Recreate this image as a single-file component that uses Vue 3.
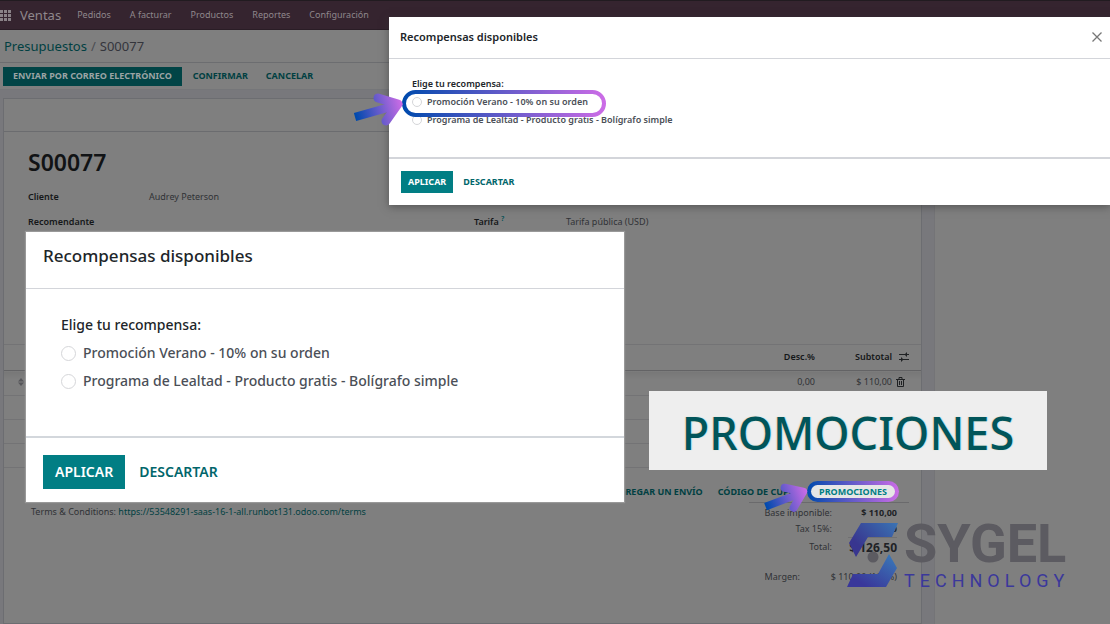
<script setup>
const menu = ['Pedidos', 'A facturar', 'Productos', 'Reportes', 'Configuración']
const rewards = ['Promoción Verano - 10% on su orden', 'Programa de Lealtad - Producto gratis - Bolígrafo simple']
const arrows = [
  { id: 'arrow-modal', name: 'arrow arrow-modal' },
  { id: 'arrow-promo', name: 'arrow arrow-promo' }
]
const dialogs = [
  { id: 'main', name: 'dialog dialog-main', closable: true },
  { id: 'detail', name: 'dialog dialog-detail', closable: false }
]
</script>

<template>
  <div class="app">
    <header class="topbar">
      <button class="apps" aria-label="Aplicaciones">
        <svg width="12" height="11" viewBox="0 0 12 11">
          <g v-for="r in 3" :key="r">
            <rect v-for="c in 3" :key="c" :x="(c - 1) * 4" :y="(r - 1) * 4" width="3" height="3" fill="#8a8287" />
          </g>
        </svg>
      </button>
      <a href="#" class="brand">Ventas</a>
      <nav class="menu">
        <a v-for="m in menu" :key="m" href="#">{{ m }}</a>
      </nav>
    </header>

    <div class="crumbs"><a href="#">Presupuestos</a><span class="slash">/</span><span>S00077</span></div>

    <div class="actions">
      <button class="primary">ENVIAR POR CORREO ELECTRÓNICO</button>
      <button>CONFIRMAR</button>
      <button>CANCELAR</button>
    </div>

    <div class="workspace">
      <main class="sheet">
        <div class="statusbar"></div>
        <h1>S00077</h1>
        <div class="fields">
          <dl>
            <dt>Cliente</dt><dd>Audrey Peterson</dd>
            <dt>Recomendante</dt><dd></dd>
          </dl>
          <dl class="right">
            <dt>Tarifa <sup>?</sup></dt><dd>Tarifa pública (USD)</dd>
          </dl>
        </div>

        <table class="lines">
          <thead>
            <tr>
              <th class="grip"></th><th></th><th class="disc">Desc.%</th><th class="sub">Subtotal</th>
              <th class="tool">
                <svg width="12" height="10" viewBox="0 0 12 10" stroke="#202224" fill="#202224">
                  <path d="M1 2.5H11M1 7.5H11" stroke-width="1" />
                  <path d="M6.500 2.500L9 0v5zM5.500 7.500L3 5v5z" stroke="none" />
                </svg>
              </th>
            </tr>
          </thead>
          <tbody>
            <tr>
              <td class="grip">
                <svg width="6" height="8" viewBox="0 0 6 8" fill="#56565a"><path d="M0 3.500L3 0l3 3.500zM0 4.500L3 8l3-3.500z" /></svg>
              </td>
              <td></td><td class="disc">0,00</td><td class="sub">$ 110,00</td>
              <td class="tool">
                <svg width="9" height="10" viewBox="0 0 9 10" fill="none" stroke="#1f2123">
                  <path d="M0 2.500h9M3 2V.500h3V2M1.500 3v6.500h6V3M3.500 4v4M5.500 4v4" />
                </svg>
              </td>
            </tr>
            <tr v-for="n in 3" :key="n"><td colspan="5"></td></tr>
          </tbody>
        </table>

        <div class="promo-actions">
          <button>AGREGAR UN ENVÍO</button>
          <button>CÓDIGO DE CUPÓN</button>
          <button class="promo"><span>PROMOCIONES</span></button>
        </div>

        <div class="summary">
          <p class="terms">Terms &amp; Conditions: <a href="#">https://53548291-saas-16-1-all.runbot131.odoo.com/terms</a></p>
          <dl class="totals">
            <dt>Base imponible:</dt><dd class="strong">$ 110,00</dd>
            <dt>Tax 15%:</dt><dd class="strong">$ 16,50</dd>
            <dt class="total">Total:</dt><dd class="total grand">$ 126,50</dd>
            <dt class="margin">Margen:</dt><dd class="margin wide">$ 110,00 (100%)</dd>
          </dl>
        </div>
      </main>
      <aside class="chatter"></aside>
    </div>

    <section v-for="d in dialogs" :key="d.id" :class="d.name" role="dialog" :aria-labelledby="d.id + '-title'">
      <header>
        <h2 :id="d.id + '-title'">Recompensas disponibles</h2>
        <button v-if="d.closable" class="close" aria-label="Cerrar">
          <svg width="10" height="10" viewBox="0 0 10 10" stroke="#777" stroke-width="1.300"><path d="M.5.5l9 9M9.500.5l-9 9" /></svg>
        </button>
      </header>
      <div class="choices" role="radiogroup" :aria-labelledby="d.id + '-prompt'">
        <p :id="d.id + '-prompt'">Elige tu recompensa:</p>
        <label v-for="r in rewards" :key="r"><input type="radio" :name="d.id"><span>{{ r }}</span></label>
      </div>
      <footer>
        <button class="apply">APLICAR</button>
        <button class="discard">DESCARTAR</button>
      </footer>
    </section>

    <div class="zoomed">PROMOCIONES</div>

    <svg class="ring" width="204" height="27" viewBox="0 0 204 27">
      <defs>
        <linearGradient id="ring-fill"><stop offset="0" stop-color="#004aad" /><stop offset="1" stop-color="#cb6ce6" /></linearGradient>
      </defs>
      <rect x="2" y="2" width="200" height="23" rx="11.500" fill="none" stroke="url(#ring-fill)" stroke-width="4" />
    </svg>

    <svg v-for="a in arrows" :key="a.id" :class="a.name" viewBox="0 0 50 34">
      <defs>
        <linearGradient :id="a.id" gradientUnits="userSpaceOnUse" x1="2" y1="24" x2="48" y2="11">
          <stop offset="0" stop-color="#004aad" /><stop offset=".5" stop-color="#665bcb" /><stop offset="1" stop-color="#cb6ce6" />
        </linearGradient>
      </defs>
      <g :stroke="`url(#${a.id})`" :fill="`url(#${a.id})`">
        <path d="M1 24L40 13" stroke-width="8.500" />
        <path d="M24 5L44 11L32 28" fill="none" stroke-width="9" stroke-linecap="round" stroke-linejoin="round" />
        <path d="M30 8L44 11L34 23Z" stroke="none" />
        <path d="M42 7L49 11L43 17Z" stroke="none" />
      </g>
    </svg>

    <div class="logo">
      <svg width="52" height="66" viewBox="0 0 52 66">
        <defs>
          <linearGradient id="logo-top" x1="0" y1=".7" x2="1" y2="0"><stop offset=".15" stop-color="#38368f" /><stop offset="1" stop-color="#3a74b4" /></linearGradient>
          <linearGradient id="logo-low" x1="0" y1="1" x2="1" y2="0"><stop offset=".2" stop-color="#39379a" /><stop offset="1" stop-color="#3a7dba" /></linearGradient>
        </defs>
        <path d="M15 1H52L46 15H22L10 35L3 21Z" fill="url(#logo-top)" />
        <circle cx="27" cy="35" r="5.500" fill="#5c5b61" />
        <path d="M43 32L51 46L40 65H1L7 52H32Z" fill="url(#logo-low)" />
      </svg>
      <div class="wordmark"><strong>SYGEL</strong><span>TECHNOLOGY</span></div>
    </div>
  </div>
</template>

<style>
html, body { background: #7f7f7f; }
body { margin: 0; overflow: hidden; }
</style>

<style scoped>
.app {
  position: relative;
  display: flex;
  flex-direction: column;
  min-height: 100vh;
  overflow: hidden;
  background: #7f7f7f;
  color: #303236;
  font-family: "Noto Sans", "Open Sans", sans-serif;
  font-size: 9px;
  line-height: 16px;
}
* { box-sizing: border-box; }
a { color: inherit; text-decoration: none; }
button { border: 0; padding: 0; background: none; color: #013f42; font: inherit; font-weight: 700; }
dl, dd, h1, h2, p { margin: 0; }
svg { display: block; }

.topbar { display: flex; align-items: center; height: 30px; background: #35242f; border-top: 1px solid #211b20; border-bottom: 1px solid #2a1d26; color: #8f878c; }
.brand { margin-left: 8px; font-size: 13px; }
.menu { display: flex; gap: 19px; margin-left: 16px; }
.crumbs { display: flex; align-items: center; height: 33px; padding: 0 4px; border-bottom: 1px solid #6c6d70; font-size: 13px; color: #34353c; }
.crumbs a { color: #013f42; }
.slash { margin: 0 4px; color: #4b4d52; }
.actions { display: flex; align-items: center; gap: 18px; height: 27px; padding: 0 3px; border-bottom: 1px solid #757679; }
.actions button { height: 19px; }
.actions .primary { padding: 0 10px; margin-right: -7px; background: #014446; color: #9aa3a4; }

.workspace { display: flex; flex: 1; padding: 8px 0 0 3px; background: #78787c; }
.sheet { flex: 1; background: #7f7f7f; border: 1px solid #6c6d71; }
.chatter { width: 176px; margin: -8px 0 0 12px; background: #7f7f7f; border-left: 1px solid #747477; }
.statusbar { height: 33px; border-bottom: 1px solid #6b6c6f; }
h1 { padding: 15px 24px 0; font-size: 23px; line-height: 30px; font-weight: 600; color: #111315; }
.fields { display: grid; grid-template-columns: 446px 1fr; padding: 12px 24px 0; height: 167px; }
dl { display: grid; grid-template-columns: 121px 1fr; grid-auto-rows: 25px; align-content: start; }
dl.right { grid-template-columns: 92px 1fr; padding-top: 25px; }
dt { font-weight: 600; color: #151719; }
sup { font-size: 7px; line-height: 7px; color: #015055; }

.lines { width: 100%; border-collapse: collapse; table-layout: fixed; }
.lines th, .lines td { height: 24px; padding: 0 0 1px; text-align: right; line-height: 16px; border-bottom: 1px solid #737375; }
.lines th { height: 26px; border-top: 1px solid #737375; border-bottom-color: #636365; color: #151719; font-weight: 600; }
.lines tbody tr:first-child td { height: 25px; padding-bottom: 2px; background: linear-gradient(#777, #7f7f7f 8px); }
.lines .grip { width: 20px; }
.lines .grip svg { margin-left: 14px; }
.lines .disc { width: 80px; }
.lines .sub { width: 77px; }
.lines .tool { width: 29px; padding-left: 6px; }
.lines td.tool { padding-left: 4px; }

.promo-actions { display: flex; justify-content: flex-end; align-items: center; gap: 15px; height: 21px; margin: 13px 22px 0 0; }
.promo { margin-left: -11px; padding: 4px; border-radius: 11px; background: linear-gradient(90deg, #004aad, #cb6ce6); color: #017e84; line-height: 13px; }
.promo span { display: block; padding: 0 8px; border-radius: 7px; background: #e6e6e6; }
.summary { display: flex; justify-content: space-between; align-items: flex-start; padding: 0 12px 0 27px; }
.terms a { color: #013f42; }
.terms { padding-top: 2px; }
.totals { grid-template-columns: 83px 65px; grid-auto-rows: 16px; padding: 2px 12px 0 0; border-top: 1px solid #6a6a6c; text-align: right; }
.totals dt { font-weight: 400; color: #303236; }
.strong { font-weight: 700; color: #202226; }
.totals .total { line-height: 20px; height: 30px; }
.totals .grand { margin-left: 16px; border-top: 1px solid #707072; font-size: 12px; font-weight: 700; color: #202226; }
.totals .margin { padding: 16px 32px 0 0; }
.totals .wide { padding-right: 0; margin-left: -32px; }

.dialog { position: absolute; display: flex; flex-direction: column; background: #fff; color: #212529; }
.dialog header { display: flex; justify-content: space-between; align-items: center; border-bottom: 1px solid #d3d5da; }
.dialog h2 { font-weight: 500; }
.choices { flex: 1; font-weight: 500; }
.choices label { display: flex; align-items: center; color: #4b4f57; }
.choices input { appearance: none; flex: none; margin: 0; border: 1px solid #d5d6d9; border-radius: 50%; background: #fff; }
.dialog footer { display: flex; align-items: center; border-top: 1px solid #d3d5da; }
.dialog .apply { background: #017e84; color: #fff; }
.dialog .discard { color: #01666b; }
.dialog-main { top: 17px; left: 389px; right: 0; height: 188px; box-shadow: 0 2px 8px #3338; }
.dialog-main header { height: 42px; padding: 0 8px 2px 11px; }
.dialog-main h2 { font-size: 11px; font-weight: 600; }
.dialog-main .choices { padding: 16px 23px 0; font-weight: 600; line-height: 18px; }
.dialog-main label { height: 18px; gap: 5px; }
.dialog-main input { width: 10px; height: 10px; }
.dialog-main footer { height: 48px; padding: 0 12px; gap: 10px; border-top-width: 2px; }
.dialog-main .apply { height: 22px; padding: 0 7px; }
.dialog-detail { top: 232px; left: 26px; width: 598px; height: 270px; font-size: 14px; line-height: 28px; box-shadow: 0 0 1px 1px #999; }
.dialog-detail header { height: 57px; padding: 0 17px 8px; }
.dialog-detail h2 { font-size: 17px; }
.dialog-detail .choices { padding: 22px 35px 0; }
.dialog-detail label { height: 28px; gap: 7px; }
.dialog-detail input { width: 15px; height: 15px; }
.dialog-detail footer { height: 66px; padding: 4px 17px 0; gap: 14px; border-top: 2px solid #d3d7dc; }
.dialog-detail button { font-weight: 600; }
.dialog-detail .apply { height: 34px; padding: 0 12px; }

.zoomed { position: absolute; top: 391px; left: 649px; width: 398px; height: 79px; background: #eee; color: #01555a; font-size: 45px; font-weight: 500; line-height: 83px; text-align: center; text-shadow: -1px 0 1px #f3d9b0, 1px 0 1px #9fe0f2; }
.ring { position: absolute; top: 90px; left: 402px; }
.arrow { position: absolute; overflow: visible; }
.arrow-modal { top: 93px; left: 354px; width: 50px; height: 34px; }
.arrow-promo { top: 483px; left: 764px; width: 45px; height: 31px; transform: rotate(-5deg); }
.logo { position: absolute; top: 522px; left: 846px; display: flex; gap: 6px; }
.wordmark { display: flex; flex-direction: column; font-family: Roboto, sans-serif; }
.wordmark strong { font-size: 54px; line-height: 44px; font-weight: 700; color: #5c5b61; }
.wordmark span { font-size: 18px; line-height: 30px; letter-spacing: 5px; color: #3b389b; }
</style>
